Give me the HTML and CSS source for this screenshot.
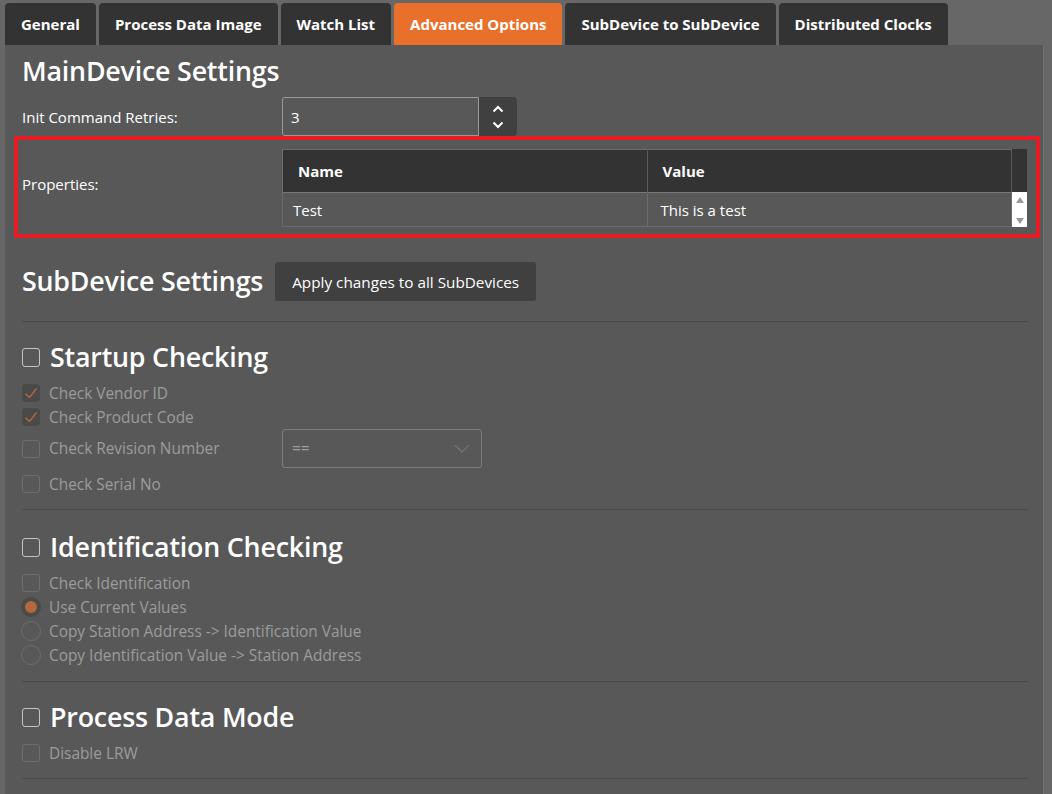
FILE: index.html
```html
<!DOCTYPE html>
<html lang="en">
<head>
  <meta charset="UTF-8" />
  <title>Advanced Options</title>
  <link rel="stylesheet" href="styles.css">
</head>
<body>
  <div class="page">
    <!-- Tab strip -->
    <div class="tabs">
      <div class="tab">General</div>
      <div class="tab">Process Data Image</div>
      <div class="tab">Watch List</div>
      <div class="tab active">Advanced Options</div>
      <div class="tab">SubDevice to SubDevice</div>
      <div class="tab">Distributed Clocks</div>
    </div>

    <div class="panel">
      <h2 class="title">MainDevice Settings</h2>

      <div class="form-row">
        <label>Init Command Retries:</label>
        <div class="spin">
          <input class="spin-input" type="text" value="3">
          <div class="spin-btns">
            <svg width="12" height="8" viewBox="0 0 12 8"><path d="M1.5 6.5 6 2l4.5 4.5" fill="none" stroke="#fff" stroke-width="2"/></svg>
            <svg width="12" height="8" viewBox="0 0 12 8"><path d="M1.5 1.5 6 6l4.5-4.5" fill="none" stroke="#fff" stroke-width="2"/></svg>
          </div>
        </div>
      </div>

      <!-- Properties grid -->
      <div class="highlight">
        <div class="form-row props">
          <label>Properties:</label>
          <div class="grid-wrap">
            <table class="grid">
              <thead>
                <tr><th>Name</th><th>Value</th></tr>
              </thead>
              <tbody>
                <tr><td>Test</td><td>This is a test</td></tr>
              </tbody>
            </table>
            <div class="vscroll">
              <div class="vscroll-head"></div>
              <div class="vscroll-track">
                <svg width="10" height="8" viewBox="0 0 10 8"><path d="M5 1 9 7H1z" fill="#9a9a9a"/></svg>
                <svg width="10" height="8" viewBox="0 0 10 8"><path d="M5 7 9 1H1z" fill="#9a9a9a"/></svg>
              </div>
            </div>
          </div>
        </div>
      </div>

      <div class="sub-head">
        <h2 class="title">SubDevice Settings</h2>
        <button class="btn">Apply changes to all SubDevices</button>
      </div>

      <!-- Startup checking -->
      <section class="group">
        <h3 class="group-title"><span class="box big"></span>Startup Checking</h3>
        <div class="opt"><span class="box checked"><svg width="14" height="12" viewBox="0 0 14 12"><path d="M1.5 6.5 5.5 10.5 12.5 1.5" fill="none" stroke="#b4683c" stroke-width="1.4"/></svg></span>Check Vendor ID</div>
        <div class="opt"><span class="box checked"><svg width="14" height="12" viewBox="0 0 14 12"><path d="M1.5 6.5 5.5 10.5 12.5 1.5" fill="none" stroke="#b4683c" stroke-width="1.4"/></svg></span>Check Product Code</div>
        <div class="opt opt-select">
          <span class="opt-label"><span class="box"></span>Check Revision Number</span>
          <div class="select">
            <span>==</span>
            <svg width="16" height="9" viewBox="0 0 16 9"><path d="M1 1l7 7 7-7" fill="none" stroke="#707070" stroke-width="1.5"/></svg>
          </div>
        </div>
        <div class="opt"><span class="box"></span>Check Serial No</div>
      </section>

      <!-- Identification checking -->
      <section class="group ident">
        <h3 class="group-title"><span class="box big"></span>Identification Checking</h3>
        <div class="opt"><span class="box"></span>Check Identification</div>
        <div class="opt"><span class="radio on"></span>Use Current Values</div>
        <div class="opt"><span class="radio"></span>Copy Station Address -&gt; Identification Value</div>
        <div class="opt"><span class="radio"></span>Copy Identification Value -&gt; Station Address</div>
      </section>

      <!-- Process data mode -->
      <section class="group">
        <h3 class="group-title"><span class="box big"></span>Process Data Mode</h3>
        <div class="opt"><span class="box"></span>Disable LRW</div>
      </section>
    </div>
  </div>
</body>
</html>
```

FILE: styles.css
```css
* { margin: 0; padding: 0; box-sizing: border-box; }

body {
  background: #676767;
  font-family: 'Open Sans', 'Noto Sans', sans-serif;
  font-size: 15px;
  color: #fff;
  height: 794px;
  overflow: hidden;
}

.page {
  padding: 3px 0 0 5px;
  width: 1044px;
}

/* Tabs */
.tabs {
  display: flex;
  gap: 3px;
}

.tab {
  height: 42px;
  line-height: 43px;
  padding: 0 16px;
  background: #333;
  border-radius: 4px 4px 0 0;
  font-weight: 700;
  font-size: 15px;
}

.tab.active {
  background: #e8702a;
}

/* Main panel */
.panel {
  background: #585858;
  border-right: 1px solid #6e6e6e;
  padding: 0 15px 20px 17px;
  min-height: 760px;
}

.title {
  font-size: 26.8px;
  font-weight: 600;
  line-height: 52px;
  letter-spacing: -0.2px;
}

.form-row {
  display: grid;
  grid-template-columns: 260px 1fr;
  align-items: center;
  font-size: 15px;
}

/* Number spinner */
.spin {
  display: flex;
  height: 39px;
  width: 235px;
}

.spin-input {
  width: 197px;
  height: 39px;
  background: #585858;
  border: 1px solid #9a9a9a;
  border-radius: 3px 0 0 3px;
  color: #fff;
  font: inherit;
  padding: 0 8px;
  outline: none;
}

.spin-btns {
  width: 38px;
  background: #404040;
  border-radius: 0 4px 4px 0;
  display: flex;
  flex-direction: column;
  align-items: center;
  justify-content: center;
  gap: 8px;
}

/* Red outlined properties block */
.highlight {
  border: 4px solid #e81c24;
  margin: 0 -12px 0 -8px;
  padding: 9px 9px 7px 4px;
}

.props label {
  padding-bottom: 8px;
}

.grid-wrap {
  display: flex;
}

.grid {
  flex: 1;
  border-collapse: collapse;
  border: 1px solid #6c6c6c;
  font-size: 15px;
}

.grid th {
  background: #333;
  height: 43px;
  text-align: left;
  padding: 0 15px;
  font-weight: 700;
  border-right: 1px solid #5a5a5a;
  width: 50%;
}

.grid td {
  height: 34px;
  padding: 0 10px;
  border: 1px solid #6c6c6c;
  border-top: 1px solid #777;
}

.grid td + td {
  padding-left: 13px;
}

.vscroll {
  width: 15px;
  display: flex;
  flex-direction: column;
}

.vscroll-head {
  height: 43px;
  background: #333;
}

.vscroll-track {
  flex: 1;
  background: #fff;
  display: flex;
  flex-direction: column;
  align-items: center;
  justify-content: space-between;
  padding: 4px 0 2px;
}

/* SubDevice header */
.sub-head {
  display: flex;
  align-items: center;
  gap: 12px;
  margin-top: 23px;
  padding-bottom: 19px;
  border-bottom: 1px solid #4a4a4a;
}

.sub-head .title {
  line-height: 39px;
  padding-bottom: 2px;
}

.btn {
  background: #404040;
  color: #fff;
  border: none;
  border-radius: 3px;
  height: 39px;
  padding: 0 17px;
  font: inherit;
  font-size: 15.3px;
}

/* Option groups */
.group {
  padding: 15px 0 13px;
  border-bottom: 1px solid #4a4a4a;
}

.group.ident {
  padding: 17px 0 14px;
}

.group-title {
  display: flex;
  align-items: center;
  gap: 10px;
  font-size: 26.8px;
  font-weight: 600;
  line-height: 40px;
  margin-bottom: 4px;
  letter-spacing: -0.2px;
}

.opt {
  display: flex;
  align-items: center;
  gap: 9px;
  height: 24px;
  color: #9c9c9c;
  font-size: 15.4px;
}

.opt-select {
  height: 39px;
  margin-bottom: 4px;
  gap: 0;
}

.opt-label {
  display: flex;
  align-items: center;
  gap: 9px;
  width: 260px;
}

.box {
  width: 18px;
  height: 18px;
  border: 1px solid #6e6e6e;
  border-radius: 3px;
  flex: none;
  display: flex;
  align-items: center;
  justify-content: center;
}

.box.big {
  border-color: #c4c4c4;
  width: 18px;
  height: 19px;
}

.box.checked {
  background: #4a4a4a;
  border-color: #4a4a4a;
}

.radio {
  width: 20px;
  height: 20px;
  border: 1px solid #6e6e6e;
  border-radius: 50%;
  flex: none;
  margin-left: -1px;
  margin-right: -1px;
}

.radio.on {
  border: 4px solid #4a4a4a;
  background: #b4683c;
}

.select {
  width: 200px;
  height: 39px;
  border: 1px solid #7c7c7c;
  border-radius: 3px;
  display: flex;
  align-items: center;
  justify-content: space-between;
  padding: 0 11px 0 9px;
  color: #9c9c9c;
}
```
